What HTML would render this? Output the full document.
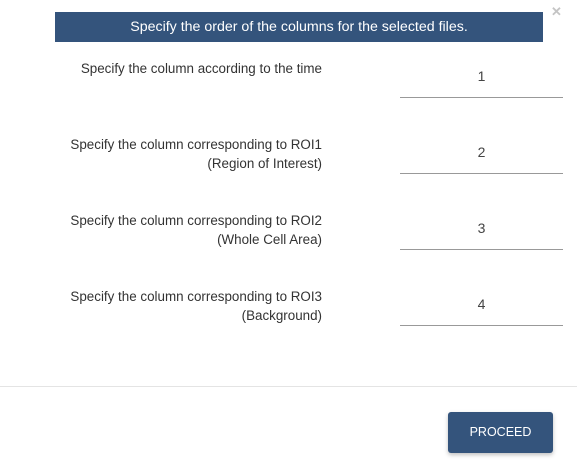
<!DOCTYPE html>
<html><head><style>
body{margin:0;width:577px;height:476px;background:#fff;font-family:"Liberation Sans",sans-serif;position:relative;overflow:hidden;color:#333}
.hdr{position:absolute;left:55px;top:12px;width:488px;height:30px;background:#34547c;color:#fff;font-size:14.2px;text-align:center;line-height:30px}
.x{position:absolute;left:551px;top:4px;color:#c4c4c4;font-size:13px;font-weight:bold}
.lbl{position:absolute;right:255px;text-align:right;font-size:13.4px;line-height:19px;color:#333}
.inp{position:absolute;left:400px;width:163px;border-bottom:1px solid #999;text-align:center;font-size:14px;color:#444;height:29px}
.div{position:absolute;left:0;top:386px;width:577px;height:1px;background:#e4e4e4}
.btn{position:absolute;left:448px;top:412px;width:105px;height:41px;background:#34547c;color:#fff;border-radius:3px;font-size:12.5px;text-align:center;line-height:41px;box-shadow:0 2px 4px rgba(0,0,0,.25)}
</style></head><body>
<div class="hdr">Specify the order of the columns for the selected files.</div>
<div class="x">✕</div>
<div class="lbl" style="top:59px">Specify the column according to the time</div>
<div class="inp" style="top:68px">1</div>
<div class="lbl" style="top:135px">Specify the column corresponding to ROI1<br>(Region of Interest)</div>
<div class="inp" style="top:144px">2</div>
<div class="lbl" style="top:211px">Specify the column corresponding to ROI2<br>(Whole Cell Area)</div>
<div class="inp" style="top:220px">3</div>
<div class="lbl" style="top:287px">Specify the column corresponding to ROI3<br>(Background)</div>
<div class="inp" style="top:296px">4</div>
<div class="div"></div>
<div class="btn">PROCEED</div>
</body></html>
